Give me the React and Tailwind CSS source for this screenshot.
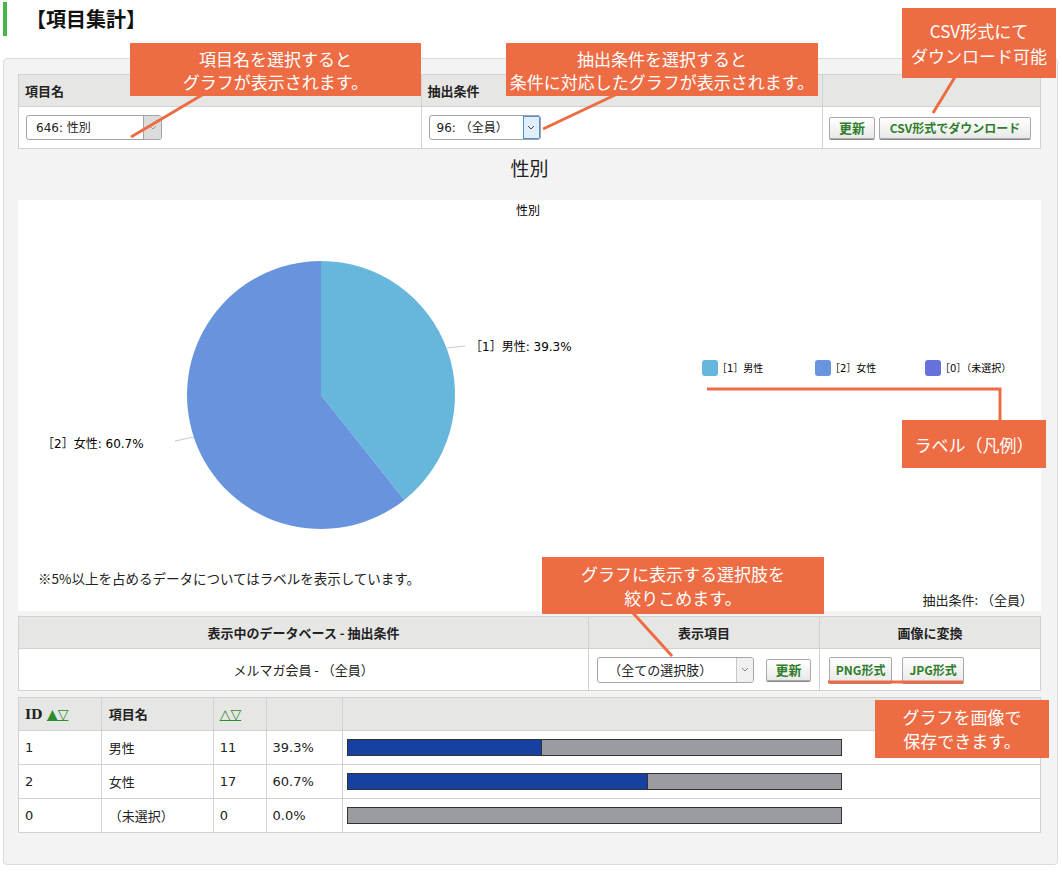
import React from "react";

const ORANGE = "#ed6c44";

const Btn = ({ children, className = "" }) => (
  <div
    className={
      "inline-flex items-center justify-center h-[22px] px-[5px] border border-[#a9a9a9] rounded-[2px] bg-gradient-to-b from-white to-[#e9e9e9] shadow-[0_1px_0_#8a8a8a] text-[12px] font-bold text-[#2f7d2a] leading-none " +
      className
    }
  >
    {children}
  </div>
);

const Chevron = ({ color = "#666" }) => (
  <svg width="8" height="5" viewBox="0 0 8 5">
    <path d="M1 1 L4 4 L7 1" fill="none" stroke={color} strokeWidth="1" />
  </svg>
);

const Note = ({ className, children }) => (
  <div
    className={
      "absolute bg-[#ed6c44] text-white text-[17px] leading-[23px] flex flex-col items-center justify-center text-center " +
      className
    }
  >
    {children}
  </div>
);

const rows = [
  { id: "1", name: "男性", n: "11", pct: "39.3%", w: 39.3 },
  { id: "2", name: "女性", n: "17", pct: "60.7%", w: 60.7 },
  { id: "0", name: "（未選択）", n: "0", pct: "0.0%", w: 0 },
];

export default function App() {
  const td = "border border-[#d2d2d2]";
  return (
    <div className="relative w-[1062px] h-[881px] bg-white overflow-hidden font-['DejaVu_Sans','Noto_Sans_CJK_JP',sans-serif] text-[#222]">
      {/* page title */}
      <div className="flex items-center pt-[2px] h-[36px]">
        <div className="ml-[3px] w-[4px] h-[34px] bg-[#46b64a]" />
        <h1 className="ml-[19px] text-[20px] font-bold font-['Noto_Sans_CJK_JP',sans-serif] text-[#111]">
          【項目集計】
        </h1>
      </div>

      <div className="mt-[22px] ml-[3px] w-[1055px] border border-[#dcdcdc] rounded-[4px] bg-[#f3f3f3] pt-[15px] pl-[14px] pr-[16px] pb-[31px]">
        {/* top selector table */}
        <table className="w-[1023px] border-collapse bg-white text-[13px]">
          <thead>
            <tr className="bg-[#e6e7e5] h-[32px]">
              <th className={td + " w-[403px] text-left pl-[6px] font-bold font-['Noto_Sans_CJK_JP',sans-serif]"}>項目名</th>
              <th className={td + " w-[402px] text-left pl-[6px] font-bold font-['Noto_Sans_CJK_JP',sans-serif]"}>抽出条件</th>
              <th className={td + " w-[218px]"}></th>
            </tr>
          </thead>
          <tbody>
            <tr className="h-[42px]">
              <td className={td + " pl-[7px]"}>
                <div className="flex w-[136px] h-[25px] border border-[#a4a4a4] rounded-[3px] bg-white overflow-hidden">
                  <div className="flex-1 flex items-center pl-[9px] text-[12px]">646: 性別</div>
                  <div className="w-[18px] bg-[#dcdcdc] border-l border-[#a4a4a4] flex items-center justify-center">
                    <Chevron color="#999" />
                  </div>
                </div>
              </td>
              <td className={td + " pl-[7px]"}>
                <div className="flex w-[112px] h-[25px] border border-[#a4a4a4] rounded-[3px] bg-white overflow-hidden">
                  <div className="flex-1 flex items-center pl-[7px] text-[12px]">96: （全員）</div>
                  <div className="w-[17px] bg-[#e2eefa] border border-[#4f8fcf] flex items-center justify-center">
                    <Chevron color="#444" />
                  </div>
                </div>
              </td>
              <td className={td + " pl-[6px]"}>
                <div className="flex gap-[4px]">
                  <Btn className="w-[46px] text-[13px] font-['Noto_Sans_CJK_JP',sans-serif]">更新</Btn>
                  <Btn className="w-[152px] font-['Noto_Sans_CJK_JP',sans-serif]">CSV形式でダウンロード</Btn>
                </div>
              </td>
            </tr>
          </tbody>
        </table>

        {/* heading */}
        <div className="h-[51px] pt-[5px] text-center text-[19px] leading-[27px] font-['Noto_Sans_CJK_JP',sans-serif]">
          性別
        </div>

        {/* chart */}
        <div className="w-[1023px] h-[411px] bg-white flex flex-col">
          <svg width="1023" height="367" className="font-['DejaVu_Sans','Noto_Sans_CJK_JP',sans-serif]">
            <text x="510" y="15" fontSize="12" textAnchor="middle" fill="#000" className="font-['Noto_Sans_CJK_JP',sans-serif]">性別</text>
            <path d="M303,195 L303,61 A134,134 0 0 1 386.4,299.9 Z" fill="#67b7dc" />
            <path d="M303,195 L386.4,299.9 A134,134 0 1 1 303,61 Z" fill="#6794dc" />
            <line x1="429" y1="148" x2="447" y2="146" stroke="#c8c8c8" strokeWidth="1" />
            <line x1="157" y1="241" x2="176" y2="237" stroke="#c8c8c8" strokeWidth="1" />
            <text x="452" y="151" fontSize="12" fill="#000">［1］男性: 39.3%</text>
            <text x="24" y="248" fontSize="12" fill="#000">［2］女性: 60.7%</text>
            <rect x="684" y="160" width="16" height="16" rx="3" fill="#67b7dc" />
            <rect x="797" y="160" width="16" height="16" rx="3" fill="#6794dc" />
            <rect x="907" y="160" width="16" height="16" rx="3" fill="#6771dc" />
            <text x="699" y="172" fontSize="10" fill="#000">［1］男性</text>
            <text x="812" y="172" fontSize="10" fill="#000">［2］女性</text>
            <text x="922" y="172" fontSize="10" fill="#000">［0］（未選択）</text>
          </svg>
          <div className="h-[22px] flex items-center pl-[20px] text-[13.5px] font-['Noto_Sans_CJK_JP',sans-serif]">
            ※5%以上を占めるデータについてはラベルを表示しています。
          </div>
          <div className="h-[22px] flex items-center justify-end pr-[8px] text-[13px] font-['Noto_Sans_CJK_JP',sans-serif]">
            抽出条件: （全員）
          </div>
        </div>

        {/* db / filter table */}
        <table className="mt-[5px] w-[1023px] border-collapse bg-white text-[13px] font-['Noto_Sans_CJK_JP',sans-serif]">
          <thead>
            <tr className="bg-[#e6e7e5] h-[32px]">
              <th className={td + " w-[571px] font-bold"}>表示中のデータベース - 抽出条件</th>
              <th className={td + " w-[231px] font-bold"}>表示項目</th>
              <th className={td + " w-[221px] font-bold"}>画像に変換</th>
            </tr>
          </thead>
          <tbody>
            <tr className="h-[42px]">
              <td className={td + " text-center"}>メルマガ会員 - （全員）</td>
              <td className={td + " pl-[8px]"}>
                <div className="flex items-center">
                  <div className="flex w-[157px] h-[26px] border border-[#a4a4a4] rounded-[3px] bg-white overflow-hidden">
                    <div className="flex-1 flex items-center pl-[10px] text-[13px]">（全ての選択肢）</div>
                    <div className="w-[17px] bg-[#f0f0f0] border-l border-[#c8c8c8] flex items-center justify-center">
                      <Chevron color="#888" />
                    </div>
                  </div>
                  <Btn className="ml-[12px] w-[45px] h-[22px] text-[13px]">更新</Btn>
                </div>
              </td>
              <td className={td + " pl-[9px]"}>
                <div className="flex gap-[10px]">
                  <Btn className="w-[63px] h-[26px] text-[11px]">PNG形式</Btn>
                  <Btn className="w-[62px] h-[26px] text-[11px]">JPG形式</Btn>
                </div>
              </td>
            </tr>
          </tbody>
        </table>

        {/* result table */}
        <table className="mt-[6px] w-[1023px] border-collapse bg-white text-[13px]">
          <thead>
            <tr className="bg-[#e6e7e5] h-[33px]">
              <th className={td + " w-[83px] text-left pl-[6px] font-bold"}>
                <span className="font-['DejaVu_Serif',serif]">ID</span>{" "}
                <span className="text-[#2e8b2e] underline text-[14px] font-normal">▲▽</span>
              </th>
              <th className={td + " w-[112px] text-left pl-[7px] font-bold font-['Noto_Sans_CJK_JP',sans-serif]"}>項目名</th>
              <th className={td + " w-[53px] text-left pl-[6px]"}>
                <span className="text-[#2e8b2e] underline text-[14px] font-normal">△▽</span>
              </th>
              <th className={td + " w-[77px]"}></th>
              <th className={td + " w-[698px]"}></th>
            </tr>
          </thead>
          <tbody>
            {rows.map((r) => (
              <tr key={r.id} className="h-[34px]">
                <td className={td + " pl-[6px]"}>{r.id}</td>
                <td className={td + " pl-[7px] font-['Noto_Sans_CJK_JP',sans-serif]"}>{r.name}</td>
                <td className={td + " pl-[6px]"}>{r.n}</td>
                <td className={td + " pl-[6px]"}>{r.pct}</td>
                <td className={td + " pl-[4px]"}>
                  <div className="w-[495px] h-[17px] border border-[#333] bg-[#9a9ca1] flex">
                    <div
                      className="h-full bg-[#1741a0] border-r border-[#333]"
                      style={{ width: `${r.w}%`, display: r.w ? "block" : "none" }}
                    />
                  </div>
                </td>
              </tr>
            ))}
          </tbody>
        </table>
      </div>

      {/* annotation lines */}
      <svg className="absolute left-0 top-0 pointer-events-none" width="1062" height="881">
        <g stroke={ORANGE} strokeWidth="3" fill="none">
          <line x1="202" y1="95" x2="131" y2="137" />
          <line x1="615" y1="95" x2="543" y2="129" />
          <line x1="955" y1="77" x2="933" y2="113" />
          <polyline points="707,389 1000,389 1000,421" />
          <line x1="633" y1="613" x2="672" y2="656" />
          <line x1="828" y1="682" x2="963" y2="682" />
        </g>
      </svg>

      {/* annotation boxes */}
      <div className="font-['Noto_Sans_CJK_JP',sans-serif]">
        <Note className="left-[130px] top-[43px] w-[291px] h-[53px]">
          <span>項目名を選択すると</span>
          <span>グラフが表示されます。</span>
        </Note>
        <Note className="left-[506px] top-[43px] w-[312px] h-[53px]">
          <span>抽出条件を選択すると</span>
          <span>条件に対応したグラフが表示されます。</span>
        </Note>
        <Note className="left-[902px] top-[8px] w-[154px] h-[70px] leading-[25px]">
          <span>CSV形式にて</span>
          <span>ダウンロード可能</span>
        </Note>
        <Note className="left-[902px] top-[420px] w-[144px] h-[48px]">
          <span>ラベル（凡例）</span>
        </Note>
        <Note className="left-[542px] top-[557px] w-[282px] h-[57px] leading-[24px]">
          <span>グラフに表示する選択肢を</span>
          <span>絞りこめます。</span>
        </Note>
        <Note className="left-[875px] top-[700px] w-[174px] h-[58px] text-[16px] leading-[24px]">
          <span>グラフを画像で</span>
          <span>保存できます。</span>
        </Note>
      </div>
    </div>
  );
}
